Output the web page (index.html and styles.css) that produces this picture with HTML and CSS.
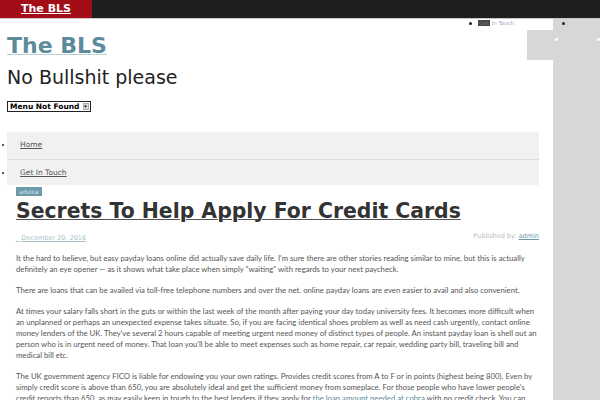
FILE: index.html
```html
<!DOCTYPE html>
<html>
<head>
<meta charset="utf-8">
<link rel="stylesheet" href="styles.css">
</head>
<body>
<div class="topbar">
  <a class="brand" href="#">The BLS</a>
</div>
<div class="page">
  <div class="main">
    <h1 class="site-title"><a href="#">The BLS</a></h1>
    <div class="tagline">No Bullshit please</div>
    <div class="select-wrap"><span class="fake-select">Menu Not Found<span class="arrow">&#9662;</span></span></div>
    <ul class="nav">
      <li><a href="#">Home</a></li>
      <li><a href="#">Get In Touch</a></li>
    </ul>
    <div class="tag-row"><span class="tag">advice</span></div>
    <h2 class="post-title"><a href="#">Secrets To Help Apply For Credit Cards</a></h2>
    <div class="meta">
      <span class="date"><span class="dash">_</span> <a href="#">December 20, 2016</a></span>
      <span class="author">Published by: <a href="#">admin</a></span>
    </div>
    <div class="content">
      <p>It the hard to believe, but easy payday loans online did actually save daily life. I'm sure there are other stories reading similar to mine, but this is actually<br>definitely an eye opener — as it shows what take place when simply "waiting" with regards to your next paycheck.</p>
      <p>There are loans that can be availed via toll-free telephone numbers and over the net. online payday loans are even easier to avail and also convenient.</p>
      <p>At times your salary falls short in the guts or within the last week of the month after paying your day today university fees. It becomes more difficult when<br>an unplanned or perhaps an unexpected expense takes situate. So, if you are facing identical shoes problem as well as need cash urgently, contact online<br>money lenders of the UK. They've several 2 hours capable of meeting urgent need money of distinct types of people. An instant payday loan is shell out an<br>person who is in urgent need of money. That loan you'll be able to meet expenses such as home repair, car repair, wedding party bill, traveling bill and<br>medical bill etc.</p>
      <p>The UK government agency FICO is liable for endowing you your own ratings. Provides credit scores from A to F or in points (highest being 800). Even by<br>simply credit score is above than 650, you are absolutely ideal and get the sufficient money from someplace. For those people who have lower people's<br>credit reports than 650, as may easily keep in tough to the best lenders if they apply for <a href="#">the loan amount needed at cobra</a> with no credit check. You can</p>
    </div>
    <div class="top-menu"><span class="dot"></span><span class="tm-text"><span class="hl">Get</span> In Touch</span></div>
    <div class="grey-block"></div>
  </div>
  <div class="sidebar">
    <span class="sb-dot"></span>
    <span class="w-dot w1"></span>
    <span class="w-dot w2"></span>
  </div>
</div>
</body>
</html>
```

FILE: styles.css
```css
* { box-sizing: border-box; }
html, body { margin: 0; padding: 0; background: #fff; }
body { font-family: "DejaVu Sans", sans-serif; color: #333; width: 600px; height: 400px; overflow: hidden; }

.topbar {
  height: 19px;
  background: #1f1f1f;
  border-bottom: 1px solid #c8c8c8;
  display: flex;
}
.brand {
  width: 92px;
  background: #a30d17;
  color: #fff;
  font-weight: bold;
  font-size: 11px;
  line-height: 18px;
  text-align: center;
  text-decoration: underline;
}

.page { display: flex; height: 381px; }
.main { width: 553px; position: relative; padding: 0 0 0 7px; }
.sidebar { flex: 1; background: #d7d7d7; position: relative; }

.site-title { margin: 14px 0 0; font-size: 22px; line-height: 26px; font-weight: bold; }
.site-title a { color: #5e8b9c; text-decoration: underline; text-decoration-color: #b9cfd7; text-decoration-thickness: 1px; }
.tagline { font-size: 19px; line-height: 24px; margin-top: 6px; color: #222; }

.select-wrap { margin-top: 9px; height: 12px; line-height: 12px; }
.fake-select {
  display: inline-flex; align-items: center;
  border: 1px solid #222; background: #fff;
  font-size: 7.5px; font-weight: bold; color: #000;
  height: 11px; padding: 0 1px 0 2px; line-height: 9px;
}
.fake-select .arrow {
  display: inline-block; margin-left: 3px; width: 6px; height: 7px;
  background: #ddd; border: 1px solid #aaa; font-size: 5px; line-height: 5px; text-align: center;
}

.nav { list-style: none; margin: 22px 14px 0 0; padding: 0; font-size: 7.5px; }
.nav li { position: relative; background: #f1f1f1; height: 26.5px; line-height: 26px; padding-left: 13px; color: #000; }
.nav li::before { content: ""; position: absolute; left: -5px; top: 12px; width: 2px; height: 2px; background: #222; border-radius: 50%; }
.nav li + li { border-top: 1px solid #dcdcdc; }
.nav a { color: #555; text-decoration: underline; }

.tag-row { height: 9px; line-height: 9px; margin: 2px 0 0 9px; }
.tag {
  display: inline-block; vertical-align: top;
  background: #6d9aab; color: #dbe8ec; font-size: 6px; line-height: 9px; padding: 0 3px;
}
.post-title { margin: 2px 0 0 9px; font-size: 20.4px; line-height: 26px; font-weight: bold; white-space: nowrap; }
.post-title a { color: #333; text-decoration: underline; text-decoration-thickness: 1px; text-decoration-color: #555; }

.meta { display: flex; justify-content: space-between; margin: 9px 14px 0 9px; font-size: 6.5px; color: #bbb; line-height: 10px; }
.date a { color: #a9c0c8; text-decoration: underline; }
.dash { color: #777; }
.author { position: relative; top: -2px; }
.author a { color: #6d9aab; text-decoration: underline; }

.content { margin: 10px 0 0 9px; font-family: "Lato", sans-serif; font-size: 7.74px; line-height: 11px; color: #555; }
.content p { margin: 0 0 10px; white-space: nowrap; }
.content a { color: #5e8b9c; text-decoration: underline; }

.top-menu { position: absolute; left: 469px; top: 1px; display: flex; align-items: center; font-size: 5.5px; color: #9ab; }
.top-menu .dot { width: 3px; height: 3px; border-radius: 50%; background: #222; margin-right: 6px; }
.top-menu .hl { background: #444; color: #777; padding: 0 1px; }
.grey-block { position: absolute; left: 527px; top: 11px; width: 26px; height: 30px; background: #d7d7d7; }

.sb-dot { position: absolute; left: 9px; top: 3px; width: 3px; height: 3px; border-radius: 50%; background: #222; }
.w-dot { position: absolute; top: 19px; width: 3px; height: 3px; border-radius: 50%; background: #fff; }
.w1 { left: 2px; }
.w2 { left: 44px; }
```
